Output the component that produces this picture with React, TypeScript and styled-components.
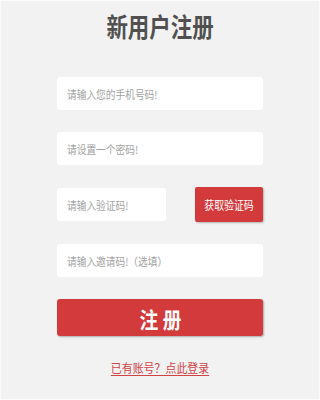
import React from 'react'
import styled, { createGlobalStyle } from 'styled-components'

const GlobalStyle = createGlobalStyle`
    html, body {
        margin: 0;
        padding: 0;
        background: #f2f2f2;
    }
    body {
        font-family: 'Noto Sans CJK SC', 'Noto Sans', sans-serif;
    }
`;

const DESIGN_WIDTH = 225;

export default function App() {
    const kx = typeof window !== 'undefined' ? window.innerWidth / DESIGN_WIDTH : 1;

    return (
        <Page style={{ '--kx': kx } as React.CSSProperties}>
            <GlobalStyle />
            <Title><Squish $s={0.58}>新用户注册</Squish></Title>

            <Form onSubmit={e => e.preventDefault()}>
                <Field>
                    <Input $s={0.62} type="tel" placeholder="请输入您的手机号码!" />
                </Field>
                <Field>
                    <Input $s={0.62} type="password" placeholder="请设置一个密码!" />
                </Field>
                <CodeRow>
                    <Field $width="52.7%">
                        <Input $s={0.62} placeholder="请输入验证码!" />
                    </Field>
                    <CodeButton type="button"><Squish $s={0.58}>获取验证码</Squish></CodeButton>
                </CodeRow>
                <Field>
                    <Input $s={0.62} placeholder="请输入邀请码!（选填）" />
                </Field>
                <SubmitButton type="submit"><Squish $s={0.6}>注 册</Squish></SubmitButton>
            </Form>

            <LoginLink href="#"><Squish $s={0.64}>已有账号？点此登录</Squish></LoginLink>
        </Page>
    )
}

const Page = styled.div`
    width: 100%;
    height: 400px;
    box-sizing: border-box;
    border: 1px solid #fbfbfb;
    background: #f2f2f2;
    display: flex;
    flex-direction: column;
    align-items: center;
    padding-top: 10px;
`;

const Squish = styled.span<{ $s: number }>`
    display: inline-block;
    white-space: nowrap;
    transform: scaleX(calc(${p => p.$s} * var(--kx)));
`;

const Title = styled.h1`
    margin: 0;
    font-size: 26px;
    line-height: 30px;
    font-weight: 700;
    color: #505050;
    text-align: center;
`;

const Form = styled.form`
    width: 64.9%;
    margin-top: 36px;
    display: flex;
    flex-direction: column;
    gap: 22px;
`;

const Field = styled.div<{ $width?: string }>`
    width: ${p => p.$width || '100%'};
    height: 33px;
    box-sizing: border-box;
    padding-left: 4.8%;
    background: #ffffff;
    border-radius: 3px;
    overflow: hidden;
    display: flex;
    align-items: center;
`;

const Input = styled.input<{ $s: number }>`
    flex-shrink: 0;
    width: calc(100% / (${p => p.$s} * var(--kx)));
    border: none;
    outline: none;
    background: transparent;
    padding: 0;
    font-family: 'Noto Sans CJK SC', sans-serif;
    font-size: 11px;
    color: #444;
    transform: scaleX(calc(${p => p.$s} * var(--kx)));
    transform-origin: left center;

    &::placeholder{
        color: #a3a3a3;
    }
`;

const CodeRow = styled.div`
    display: flex;
    align-items: center;
    justify-content: space-between;
    height: 35px;
`;

const CodeButton = styled.button`
    width: 32.9%;
    height: 35px;
    border: none;
    border-radius: 2px;
    background: #d33a3c;
    color: #ffffff;
    font-family: 'Noto Sans CJK SC', sans-serif;
    font-size: 12px;
    padding: 0;
    box-shadow: 1px 1px 2px rgba(0, 0, 0, 0.25);
    cursor: pointer;
`;

const SubmitButton = styled.button`
    width: 100%;
    height: 37px;
    border: none;
    border-radius: 3px;
    background: #d33a3c;
    color: #ffffff;
    font-family: 'Noto Sans CJK SC', sans-serif;
    font-size: 22px;
    font-weight: 700;
    line-height: 1;
    padding: 0;
    box-shadow: 1px 1px 2px rgba(0, 0, 0, 0.3);
    cursor: pointer;
`;

const LoginLink = styled.a`
    margin-top: 24px;
    font-size: 12px;
    line-height: 16px;
    color: #d04346;
    text-decoration: none;

    span{
        text-decoration: underline;
        text-underline-offset: 2px;
    }
`;
